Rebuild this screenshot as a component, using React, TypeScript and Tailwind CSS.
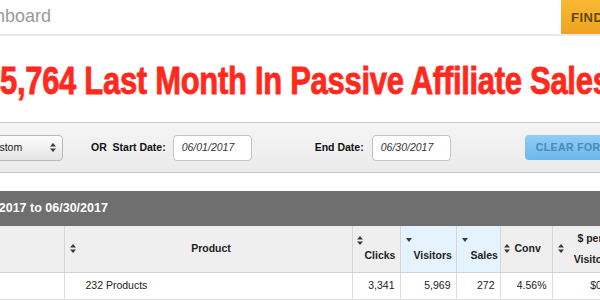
import React from "react";

function SortIcon({ className = "" }: { className?: string }) {
  return (
    <svg width="6" height="9" viewBox="0 0 6 9" className={"shrink-0 " + className}>
      <path d="M0 3.6 L3 0 L6 3.6 Z" fill="#3a3a3a" />
      <path d="M0 5.4 L3 9 L6 5.4 Z" fill="#3a3a3a" />
    </svg>
  );
}

function DownIcon({ className = "" }: { className?: string }) {
  return (
    <svg width="6" height="4" viewBox="0 0 6 4" className={"shrink-0 " + className}>
      <path d="M0 0 L6 0 L3 4 Z" fill="#3a3a3a" />
    </svg>
  );
}

const rows = [
  { product: "232 Products", clicks: "3,341", visitors: "5,969", sales: "272", conv: "4.56%", perVisitor: "$0.96" },
];

export default function App() {
  return (
    <div className="w-[600px] h-[300px] overflow-hidden bg-white font-['Liberation_Sans',Arial,sans-serif]">
      {/* top bar */}
      <div className="h-[36px] border-b-2 border-[#e8e8e8] overflow-hidden">
        <div className="-ml-[37px] w-[723px] flex justify-between items-start">
          <span className="mt-[5px] text-[18px] leading-[22px] text-[#9a9a9a]">Dashboard</span>
          <button className="w-[125px] h-[35px] rounded-bl-[4px] bg-gradient-to-b from-[#f9b935] to-[#eea21f] text-left pl-[10px] text-[13px] font-bold tracking-[0.5px] text-[#5e4812] shadow-[inset_0_-1px_0_#d58a12]">
            FIND PRODUCTS
          </button>
        </div>
      </div>

      {/* headline */}
      <div className="h-[86px] flex items-center overflow-hidden">
        <h1 className="-ml-[17px] mt-[2px] whitespace-nowrap font-['Liberation_Sans_Narrow','Liberation_Sans',sans-serif] font-bold text-[31px] leading-none text-[#ff2a1d] scale-y-[1.27] origin-center tracking-[-0.3px] [-webkit-text-stroke:0.7px_#ff2a1d]">
          $5,764 Last Month In Passive Affiliate Sales
        </h1>
      </div>

      {/* filter panel */}
      <div className="h-[51px] border-y border-[#c9c9c9] bg-gradient-to-b from-[#f5f5f5] to-[#ebebeb] flex items-center overflow-hidden text-[10.5px] text-[#111]">
        <div className="-ml-[37px] w-[100px] h-[26px] shrink-0 rounded-[4px] border border-[#b9b9b9] bg-gradient-to-b from-[#fdfdfd] to-[#e4e4e4] flex items-center justify-between pl-[22px] pr-[6px]">
          <span className="text-[#222]">Custom</span>
          <SortIcon />
        </div>
        <span className="ml-[28px] font-bold whitespace-nowrap">OR&nbsp; Start Date:</span>
        <div className="ml-[7px] w-[79px] h-[26px] shrink-0 rounded-[4px] border border-[#c4c4c4] bg-white flex items-center pl-[8px] italic text-[#333]">
          06/01/2017
        </div>
        <span className="ml-[63px] font-bold whitespace-nowrap">End Date:</span>
        <div className="ml-[8px] w-[79px] h-[26px] shrink-0 rounded-[4px] border border-[#c4c4c4] bg-white flex items-center pl-[8px] italic text-[#333]">
          06/30/2017
        </div>
        <button className="ml-[74px] w-[110px] h-[25px] shrink-0 rounded-[4px] bg-gradient-to-b from-[#8fcdf5] to-[#6db8ec] text-left pl-[11px] text-[10.5px] font-bold tracking-[0.4px] text-[#4c88b8]">
          CLEAR FORM
        </button>
      </div>

      {/* report band */}
      <div className="mt-[18px] h-[35px] bg-[#6f6f6f] flex items-center overflow-hidden">
        <span className="-ml-[36px] whitespace-nowrap text-[12.5px] font-bold text-white">
          06/01/2017 to 06/30/2017
        </span>
      </div>

      {/* table */}
      <table className="table-fixed w-[622px] border-collapse text-[10.5px] text-[#222]">
        <colgroup>
          <col className="w-[64px]" />
          <col className="w-[288px]" />
          <col className="w-[48px]" />
          <col className="w-[56px]" />
          <col className="w-[44px]" />
          <col className="w-[52px]" />
          <col className="w-[70px]" />
        </colgroup>
        <thead>
          <tr className="h-[46px] bg-[#efefef] font-bold border-b border-[#d2d2d2]">
            <th className="border-r border-[#d6d6d6]" />
            <th className="border-r border-[#d6d6d6] px-[5px]">
              <div className="flex items-center">
                <SortIcon />
                <span className="flex-1 text-center">Product</span>
              </div>
            </th>
            <th className="border-r border-[#d6d6d6] px-[4px]">
              <div className="flex items-end h-[30px]">
                <SortIcon className="self-start mt-[2px]" />
                <span className="ml-[2px]">Clicks</span>
              </div>
            </th>
            <th className="border-r border-[#d6d6d6] bg-[#e4f3fd] px-[5px]">
              <div className="flex items-end h-[30px]">
                <DownIcon className="self-start mt-[4px]" />
                <span className="ml-[2px]">Visitors</span>
              </div>
            </th>
            <th className="border-r border-[#d6d6d6] bg-[#e4f3fd] px-[5px]">
              <div className="flex items-end h-[30px]">
                <DownIcon className="self-start mt-[4px]" />
                <span className="ml-[3px]">Sales</span>
              </div>
            </th>
            <th className="border-r border-[#d6d6d6] px-[3px]">
              <div className="flex items-center">
                <SortIcon />
                <span className="ml-[5px]">Conv</span>
              </div>
            </th>
            <th className="border-r border-[#d6d6d6] px-[5px]">
              <div className="flex items-center">
                <SortIcon />
                <span className="flex-1 text-center leading-[21px]">
                  $ per
                  <br />
                  Visitor
                </span>
              </div>
            </th>
          </tr>
        </thead>
        <tbody>
          {rows.map((r) => (
            <tr key={r.product} className="h-[27px] border-b border-[#dcdcdc] bg-white">
              <td className="border-r border-[#dcdcdc]" />
              <td className="border-r border-[#dcdcdc] pl-[21px]">{r.product}</td>
              <td className="border-r border-[#dcdcdc] text-right pr-[5px]">{r.clicks}</td>
              <td className="border-r border-[#dcdcdc] text-right pr-[5px]">{r.visitors}</td>
              <td className="border-r border-[#dcdcdc] text-right pr-[5px]">{r.sales}</td>
              <td className="border-r border-[#dcdcdc] text-right pr-[5px]">{r.conv}</td>
              <td className="border-r border-[#dcdcdc] text-right pr-[5px]">{r.perVisitor}</td>
            </tr>
          ))}
        </tbody>
      </table>
    </div>
  );
}
